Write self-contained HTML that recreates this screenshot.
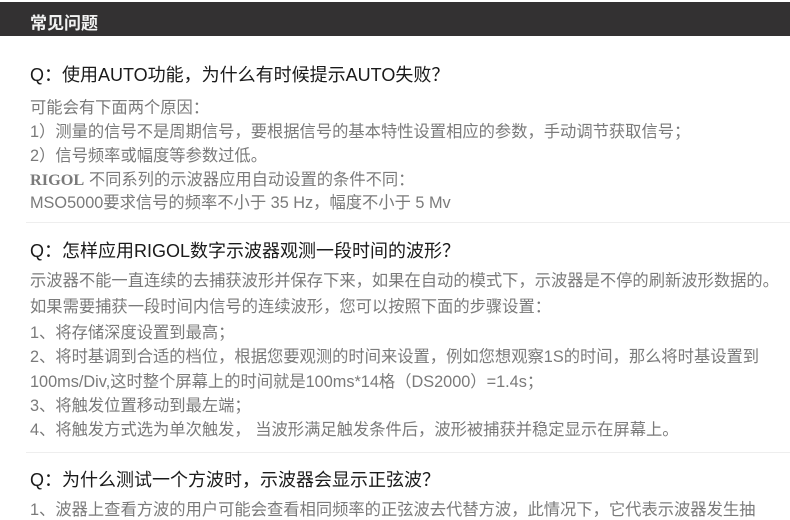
<!DOCTYPE html><html><head><meta charset="utf-8"><style>
body{margin:0;width:790px;height:507px;overflow:hidden;background:#fff;font-family:"Liberation Sans","Noto Sans CJK SC",sans-serif;}
.hd{position:absolute;left:0;top:2px;width:790px;height:34px;background:#333132;}
.hd span{position:absolute;left:30px;top:7px;color:#f2f2f2;font-size:17px;font-weight:bold;}
.t{position:absolute;left:30px;white-space:nowrap;}
.q{font-size:18px;color:#1a1a1a;}
.b{font-size:16.3px;color:#7a7a7a;}
.sep{position:absolute;left:26px;width:764px;height:1px;background:#eee;}
</style></head><body>
<div class="hd"><span>常见问题</span></div>
<div class="t q" style="top:61px">Q：使用AUTO功能，为什么有时候提示AUTO失败？</div>
<div class="t b" style="top:94px">可能会有下面两个原因：</div>
<div class="t b" style="top:118px">1）测量的信号不是周期信号，要根据信号的基本特性设置相应的参数，手动调节获取信号；</div>
<div class="t b" style="top:142px">2）信号频率或幅度等参数过低。</div>
<div class="t b" style="top:166px"><b style="font-family:'Liberation Serif',serif">RIGOL</b> 不同系列的示波器应用自动设置的条件不同：</div>
<div class="t b" style="top:189px">MSO5000要求信号的频率不小于 35 Hz，幅度不小于 5 Mv</div>
<div class="sep" style="top:222px"></div>
<div class="t q" style="top:237px">Q：怎样应用RIGOL数字示波器观测一段时间的波形？</div>
<div class="t b" style="top:267px">示波器不能一直连续的去捕获波形并保存下来，如果在自动的模式下，示波器是不停的刷新波形数据的。</div>
<div class="t b" style="top:293px">如果需要捕获一段时间内信号的连续波形，您可以按照下面的步骤设置：</div>
<div class="t b" style="top:319px">1、将存储深度设置到最高；</div>
<div class="t b" style="top:343px">2、将时基调到合适的档位，根据您要观测的时间来设置，例如您想观察1S的时间，那么将时基设置到</div>
<div class="t b" style="top:368px">100ms/Div,这时整个屏幕上的时间就是100ms*14格（DS2000）=1.4s；</div>
<div class="t b" style="top:392px">3、将触发位置移动到最左端；</div>
<div class="t b" style="top:416px">4、将触发方式选为单次触发， 当波形满足触发条件后，波形被捕获并稳定显示在屏幕上。</div>
<div class="sep" style="top:452px"></div>
<div class="t q" style="top:466px">Q：为什么测试一个方波时，示波器会显示正弦波？</div>
<div class="t b" style="top:496px">1、波器上查看方波的用户可能会查看相同频率的正弦波去代替方波，此情况下，它代表示波器发生抽</div>
</body></html>
